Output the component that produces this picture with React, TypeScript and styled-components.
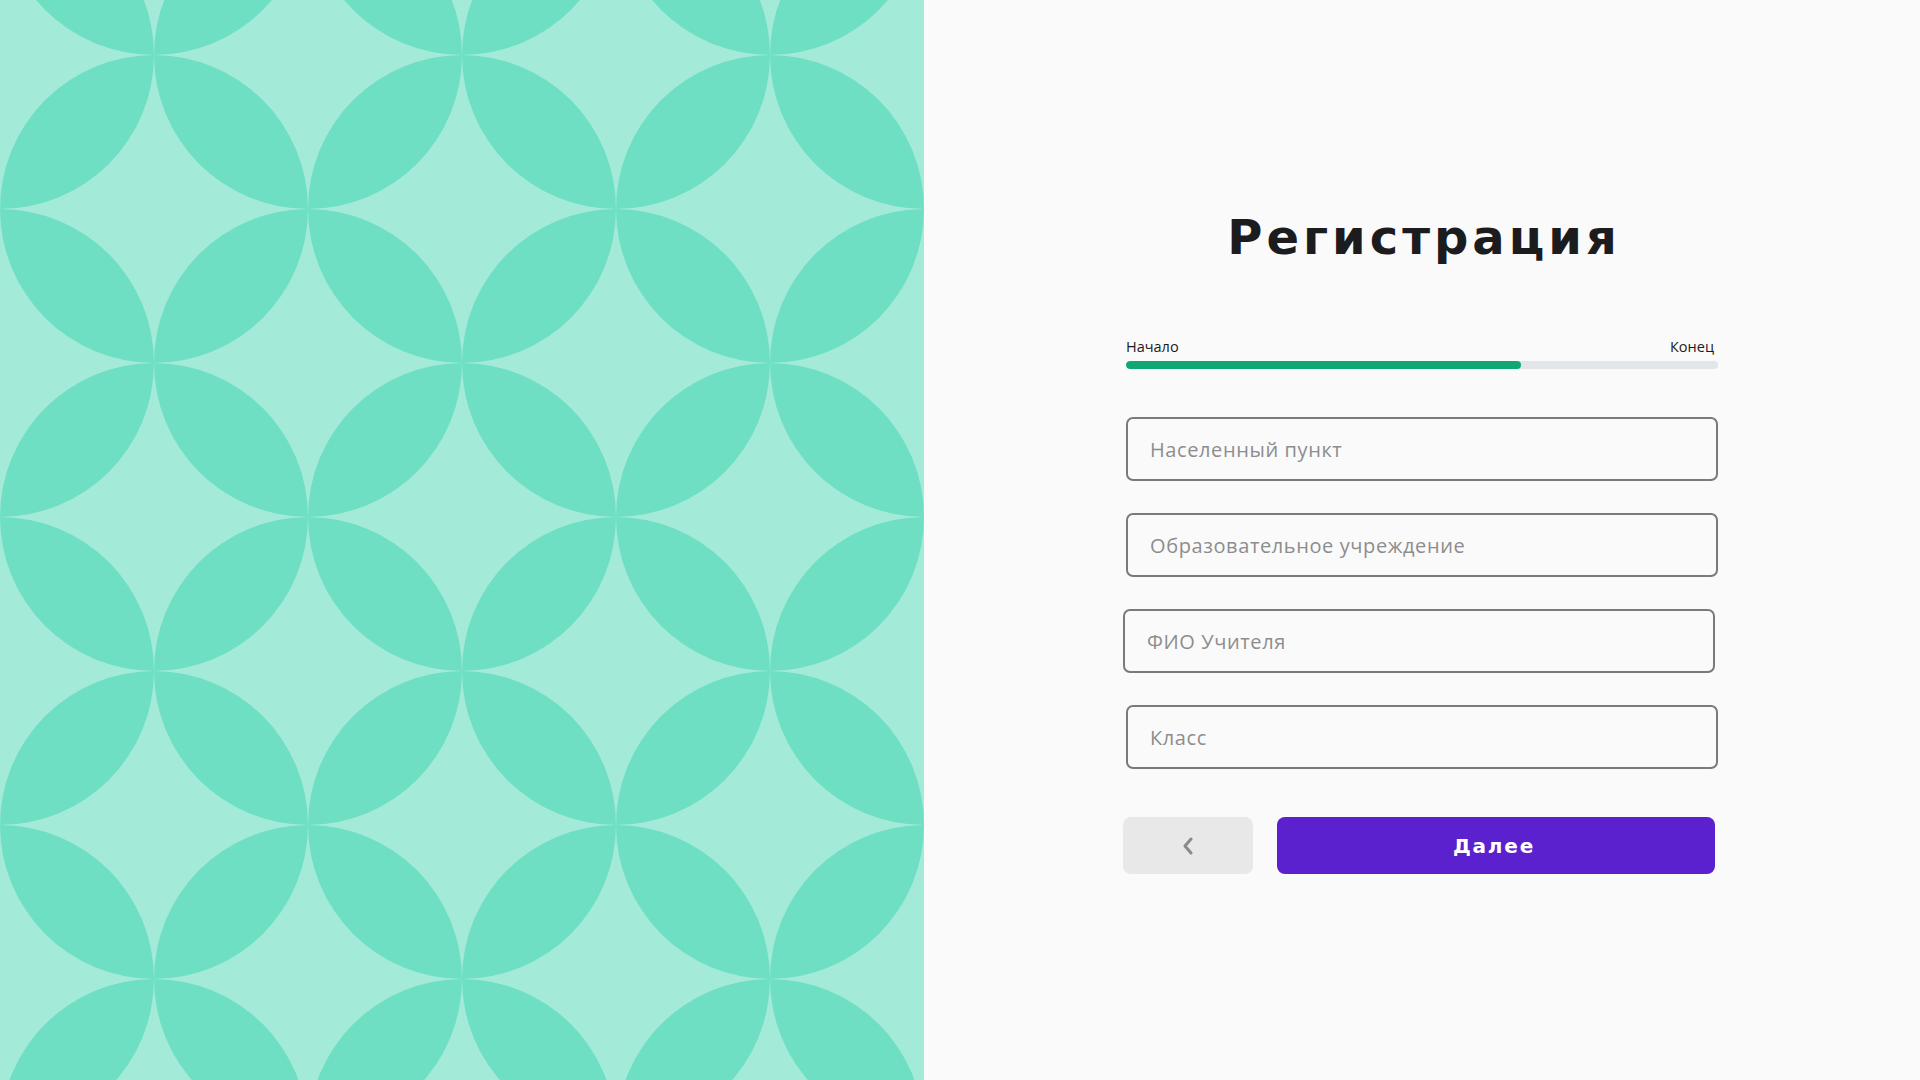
import React from "react";
import styled, { createGlobalStyle } from "styled-components";

const GlobalStyle = createGlobalStyle`
  html, body {
    margin: 0;
    padding: 0;
    background: #fafafa;
  }
  * {
    box-sizing: border-box;
  }
`;

const Page = styled.div`
  display: flex;
  width: 100%;
  height: 100vh;
  overflow: hidden;
`;

const PatternPanel = styled.div`
  flex: 0 0 924px;
  height: 100%;
  background: #a3ebd8;
  svg {
    display: block;
    width: 100%;
    height: 100%;
  }
`;

const FormPanel = styled.div`
  flex: 1;
  display: flex;
  justify-content: center;
  padding-top: 209px;
  background: #fafafa;
`;

const Form = styled.div`
  width: 592px;
  display: flex;
  flex-direction: column;
`;

const Title = styled.h1`
  margin: 0;
  padding-left: 4px;
  text-align: center;
  font-family: "DejaVu Sans", sans-serif;
  font-weight: 700;
  font-size: 48px;
  line-height: 56px;
  letter-spacing: 4px;
  color: #1c1c1e;
`;

const Progress = styled.div`
  margin-top: 72px;
  .labels {
    display: flex;
    justify-content: space-between;
    font-family: "Open Sans", sans-serif;
    font-size: 14.5px;
    line-height: 20px;
    color: #1a1a1a;
    padding-right: 4px;
  }
  .track {
    margin-top: 4px;
    height: 8px;
    border-radius: 4px;
    background: #e2e5e9;
    overflow: hidden;
  }
  .fill {
    height: 100%;
    border-radius: 4px;
    background: #10a776;
  }
`;

const Fields = styled.div`
  margin-top: 48px;
  display: flex;
  flex-direction: column;
  gap: 32px;
`;

const Input = styled.input<{ $shift?: boolean }>`
  display: block;
  width: 592px;
  height: 64px;
  margin-left: ${(p) => (p.$shift ? "-3px" : "0")};
  padding: 0 22px;
  border: 2px solid #7a7a7a;
  border-radius: 7px;
  background: #fafafa;
  font-family: "Open Sans", sans-serif;
  font-size: 20px;
  letter-spacing: 0.6px;
  color: #333;
  outline: none;
  &::placeholder {
    color: #8d8d8d;
  }
`;

const Actions = styled.div`
  margin-top: 48px;
  margin-left: -3px;
  display: flex;
  gap: 24px;
`;

const BackButton = styled.button`
  flex: 0 0 130px;
  height: 57px;
  border: none;
  border-radius: 8px;
  background: #e8e8e8;
  display: flex;
  align-items: center;
  justify-content: center;
  cursor: pointer;
`;

const NextButton = styled.button`
  flex: 0 0 438px;
  height: 57px;
  border: none;
  border-radius: 8px;
  background: #5c21cf;
  color: #fff;
  font-family: "DejaVu Sans", sans-serif;
  font-weight: 700;
  font-size: 20px;
  letter-spacing: 1.8px;
  padding-left: 2px;
  cursor: pointer;
`;

const S = 154;

const lens = (ax: number, ay: number, bx: number, by: number) =>
  `M${ax},${ay} A${S},${S} 0 0 1 ${bx},${by} A${S},${S} 0 0 1 ${ax},${ay} Z`;

const Pattern = () => (
  <svg xmlns="http://www.w3.org/2000/svg">
    <defs>
      <pattern id="petals" patternUnits="userSpaceOnUse" x="0" y="55" width={S * 2} height={S * 2}>
        <path d={lens(0, S, S, 0)} fill="#6fdfc4" />
        <path d={lens(S, 0, S * 2, S)} fill="#6fdfc4" />
        <path d={lens(0, S, S, S * 2)} fill="#6fdfc4" />
        <path d={lens(S, S * 2, S * 2, S)} fill="#6fdfc4" />
      </pattern>
    </defs>
    <rect width="100%" height="100%" fill="url(#petals)" />
  </svg>
);

const ChevronLeft = () => (
  <svg width="12" height="18" viewBox="0 0 12 18" fill="none">
    <path d="M9 2 L3 9 L9 16" stroke="#8a8a8a" strokeWidth="3" strokeLinecap="round" strokeLinejoin="round" />
  </svg>
);

const App = () => {
  return (
    <>
      <GlobalStyle />
      <Page>
        <PatternPanel>
          <Pattern />
        </PatternPanel>
        <FormPanel>
          <Form>
            <Title>Регистрация</Title>
            <Progress>
              <div className="labels">
                <span>Начало</span>
                <span>Конец</span>
              </div>
              <div className="track">
                <div className="fill" style={{ width: "66.7%" }} />
              </div>
            </Progress>
            <Fields>
              <Input placeholder="Населенный пункт" />
              <Input placeholder="Образовательное учреждение" />
              <Input $shift placeholder="ФИО Учителя" />
              <Input placeholder="Класс" />
            </Fields>
            <Actions>
              <BackButton aria-label="Назад">
                <ChevronLeft />
              </BackButton>
              <NextButton>Далее</NextButton>
            </Actions>
          </Form>
        </FormPanel>
      </Page>
    </>
  );
};

export default App;
